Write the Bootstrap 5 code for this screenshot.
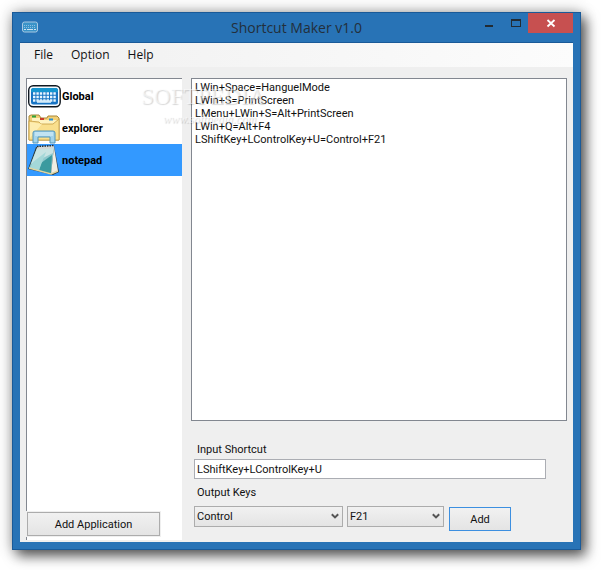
<!DOCTYPE html>
<html lang="en">
<head>
<meta charset="utf-8">
<meta name="viewport" content="width=device-width, initial-scale=1">
<title>Shortcut Maker v1.0</title>
<link href="https://cdn.jsdelivr.net/npm/bootstrap@5.3.0/dist/css/bootstrap.min.css" rel="stylesheet">
<style>
html, body { height: 100%; }
body { font: 11px/13px Roboto, "Liberation Sans", sans-serif; color: #111; background: #fff; padding: 12px 20px 20px 12px; }
.app-window { background: #2873b6; border: 1px solid #1a5a98; padding: 0 7px 7px; box-shadow: 5px 6px 12px rgba(0,0,0,.6), 0 0 14px rgba(0,0,0,.3); }
.title-bar { height: 29px; }
.title-side { width: 108px; }
.title-side > svg { margin: 8px 0 0 2px; }
.title-text { font: 14px/29px "Open Sans", sans-serif; color: #232f3b; }
.win-btn { border: 0; background: none; width: 27px; height: 20px; padding: 0; line-height: 0; }
.win-close { width: 45px; background: #c75050; }
.win-btn svg { vertical-align: top; }
.client { background: #efefef; border-top: 1px solid #1a5a98; }
.menu-strip { background: linear-gradient(90deg, #f0f0f0, #fcfcfc); padding: 0 6px; }
.menu-strip a { font: 12px/24px "Open Sans", sans-serif; color: #111; padding: 0 8px; margin-right: 2px; }
.work { padding: 11px 6px 2px; gap: 9px; }
.app-pane { width: 156px; background: #fff; border: 1px solid #828790; border-width: 1px 0 0 1px; padding: 1px 0 4px; }
.app-item { height: 32px; border: 0; background: none; color: #000; font-weight: 700; padding: 0 0 0 1px; gap: 1px; }
.app-item.active { background: #39f; }
.face { background: linear-gradient(#f1f1f1, #e4e4e4); border: 1px solid #acacac; color: #111; }
.face-add-app { width: 133px; height: 24px; outline: 1px solid #efefef; }
.face-add { width: 62px; height: 24px; border-color: #3c8fe0; margin: 1px 0 0 1px; }
.key-list { background: #fff; border: 1px solid #828790; padding: 2px 3px; }
.entry { padding: 22px 21px 9px 3px; }
.entry label { line-height: 14px; margin-left: 3px; }
.field { border: 1px solid #abadb3; height: 20px; padding: 0 2px; color: #111; margin: 2px 0 7px; }
.combo-row { gap: 4px; margin-top: 6px; }
.combo { height: 21px; padding: 0 2px; appearance: none; }
.combo-wide { width: 149px; }
.combo-slim { width: 97px; }
.combo-box svg { position: absolute; right: 4px; top: 7px; pointer-events: none; }
.overlay-mark { position: absolute; left: 121px; top: 41px; font-family: "Liberation Serif", serif; color: rgba(255,255,255,.55); text-shadow: 1px 1px 1px rgba(0,0,0,.16); pointer-events: none; }
.overlay-mark b { display: block; font: 23px/26px "Liberation Serif", serif; }
.overlay-mark span { display: block; font: italic 12px/18px "Liberation Serif", serif; padding-left: 22px; }
</style>
</head>
<body>
<main class="app-window h-100 d-flex flex-column">
  <header class="title-bar d-flex flex-shrink-0">
    <div class="title-side flex-shrink-0">
      <svg class="d-block" width="16" height="12" viewBox="0 0 16 12" aria-hidden="true">
        <rect x=".5" y="1" width="15" height="10" rx="2" fill="#3a93c8" stroke="#a9c9e2"/>
        <path d="M2 4.500h12M2 6.500h12" stroke="#8cc0e2" stroke-dasharray="1 1"/>
        <path d="M2 8.500h2m1 0h6m1 0h2" stroke="#d0e4f2"/>
      </svg>
    </div>
    <h1 class="title-text flex-grow-1 text-center m-0">Shortcut Maker v1.0</h1>
    <div class="title-side flex-shrink-0 d-flex justify-content-end">
      <button type="button" class="win-btn" aria-label="Minimize"><svg width="27" height="20"><path d="M11 14h8v-2h-8z" fill="#222b33"/></svg></button>
      <button type="button" class="win-btn" aria-label="Maximize"><svg width="27" height="20"><rect x="10.500" y="6.500" width="9" height="7" fill="none" stroke="#222b33"/><path d="M10 7h10" stroke="#222b33" stroke-width="2"/></svg></button>
      <button type="button" class="win-btn win-close" aria-label="Close"><svg width="45" height="20"><path d="M19.500 7l7 6.500m0-6.500l-7 6.500" stroke="#fff" stroke-width="1.800"/></svg></button>
    </div>
  </header>
  <div class="client position-relative flex-grow-1 d-flex flex-column">
    <nav class="menu-strip d-flex">
      <a class="text-decoration-none" href="#file">File</a>
      <a class="text-decoration-none" href="#option">Option</a>
      <a class="text-decoration-none" href="#help">Help</a>
    </nav>
    <div class="work flex-grow-1 d-flex">
      <section class="app-pane flex-shrink-0 d-flex flex-column">
        <button type="button" class="app-item d-flex align-items-center">
          <svg width="33" height="32" viewBox="0 0 33 32" aria-hidden="true">
            <rect x=".7" y="5.700" width="31.500" height="21" rx="4.500" fill="#f5faff" stroke="#101820" stroke-width="1.400"/>
            <rect x="3" y="8" width="27" height="16.500" rx="2.500" fill="#1774c4"/>
            <path d="M3 12v-1.500Q3 8 5.500 8h22Q30 8 30 10.500V12z" fill="#1595cf"/>
            <path d="M5 13.500h23M5 17h23M5 20.500h23" stroke="#e8f6ff" stroke-width="2.300" stroke-dasharray="2.400 1"/>
            <path d="M9 21.500h14" stroke="#d4ecfa" stroke-width="2.600"/>
          </svg>
          <span>Global</span>
        </button>
        <button type="button" class="app-item d-flex align-items-center">
          <svg width="33" height="32" viewBox="0 0 33 32" aria-hidden="true">
            <path d="M1 28V4l2-1h8l2 3h6l1-2h9l2 2v22z" fill="#f2d077" stroke="#a98736"/>
            <path d="M4 6h9l2 2h14v6H4z" fill="#fff3c0"/>
            <path d="M4 4.500h4" stroke="#2ea43c" stroke-width="2"/>
            <path d="M12 7h4" stroke="#cb3d2b" stroke-width="2"/>
            <path d="M21 7.500h4" stroke="#2c91d2" stroke-width="2"/>
            <path d="M1 28V9l10 1 2 2h12l6-5v21z" fill="#f9df8d" stroke="#c59d45" stroke-width=".8"/>
            <path d="M2 10v16L14 12z" fill="#fdedb0"/>
            <path d="M5 31V21q0-2 2-2h18q2 0 2 2v10h-5v-6H10v6z" fill="#a3d3ea" stroke="#5295bb"/>
            <path d="M7 21h18M7 23h18" stroke="#dff3fc"/>
          </svg>
          <span>explorer</span>
        </button>
        <button type="button" class="app-item active d-flex align-items-center" aria-current="true">
          <svg width="33" height="32" viewBox="0 0 33 32" aria-hidden="true">
            <path d="M8 3l18-1 5 26-6 3L0 25z" fill="#303a3d"/>
            <path d="M9 4l17-1-3 27L1 24z" fill="#8fc9cd"/>
            <path d="M9 4l17-1-1 6L3 20z" fill="#c8e4e3"/>
            <path d="M13 19l11-8-1 19-12-3z" fill="#3b9a9f"/>
            <path d="M5 18l13-10-7 18-9-2z" fill="#a4d8d8"/>
            <path d="M26 3l4 24-7 3z" fill="#f0eee3"/>
            <path d="M1 24l22 6 7-3" fill="none" stroke="#e1d6a1" stroke-width="1.500"/>
            <path d="M9 4l17-1" stroke="#d4d8d5" stroke-width="3"/>
            <path d="M9 2.500l17-1" stroke="#252b2d" stroke-width="1.500" stroke-dasharray="1.500 1"/>
          </svg>
          <span>notepad</span>
        </button>
        <button type="button" class="face face-add-app p-0 mt-auto">Add Application</button>
      </section>
      <section class="flex-grow-1 d-flex flex-column">
        <ul class="key-list list-unstyled flex-grow-1 m-0">
          <li>LWin+Space=HanguelMode</li>
          <li>LWin+S=PrintScreen</li>
          <li>LMenu+LWin+S=Alt+PrintScreen</li>
          <li>LWin+Q=Alt+F4</li>
          <li>LShiftKey+LControlKey+U=Control+F21</li>
        </ul>
        <form class="entry d-flex flex-column">
          <label for="input-shortcut">Input Shortcut</label>
          <input id="input-shortcut" class="field w-100" type="text" value="LShiftKey+LControlKey+U">
          <label for="output-mod">Output Keys</label>
          <div class="combo-row d-flex align-items-start">
            <div class="combo-box position-relative">
              <select id="output-mod" class="face combo combo-wide"><option>Control</option></select>
              <svg width="8" height="7" aria-hidden="true"><path d="M.8 1.200L4 4.400l3.200-3.200" fill="none" stroke="#555" stroke-width="2"/></svg>
            </div>
            <div class="combo-box position-relative">
              <select class="face combo combo-slim" aria-label="Output key"><option>F21</option></select>
              <svg width="8" height="7" aria-hidden="true"><path d="M.8 1.200L4 4.400l3.200-3.200" fill="none" stroke="#555" stroke-width="2"/></svg>
            </div>
            <button type="button" class="face face-add p-0">Add</button>
          </div>
        </form>
      </section>
    </div>
    <div class="overlay-mark"><b>SOFTPEDIA</b><span>www.softpedia.com</span></div>
  </div>
</main>
<script src="https://cdn.jsdelivr.net/npm/bootstrap@5.3.0/dist/js/bootstrap.bundle.min.js"></script>
</body>
</html>
